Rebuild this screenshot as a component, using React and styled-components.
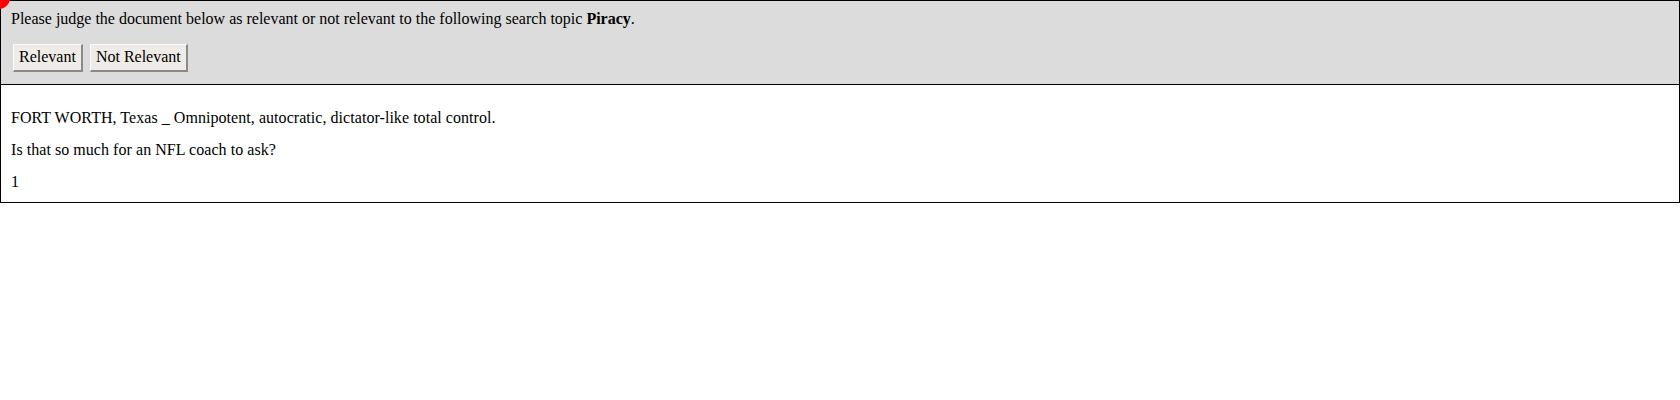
import React from "react";
import styled, { createGlobalStyle } from "styled-components";

const GlobalStyle = createGlobalStyle`
  body {
    margin: 0;
    background: #ffffff;
    font-family: "Liberation Serif", "Times New Roman", serif;
    font-size: 16px;
    color: #000;
  }
`;

function App() {
  return (
    <Page>
      <GlobalStyle />
      <JudgePanel>
        <Prompt>
          Please judge the document below as relevant or not relevant to the following search topic <b>Piracy</b>.
        </Prompt>
        <ButtonRow>
          <JudgeButton>Relevant</JudgeButton>
          <JudgeButton>Not Relevant</JudgeButton>
        </ButtonRow>
      </JudgePanel>
      <DocumentPanel>
        <Para>FORT WORTH, Texas _ Omnipotent, autocratic, dictator-like total control.</Para>
        <Para>Is that so much for an NFL coach to ask?</Para>
        <Para>1</Para>
      </DocumentPanel>
      {/* little red dot sitting on the top-left corner */}
      <Marker />
    </Page>
  );
}

const Page = styled.div`
  position: relative;
  overflow: hidden;
`;

const Marker = styled.div`
  position: absolute;
  left: -12px;
  top: -13px;
  width: 22px;
  height: 22px;
  border-radius: 50%;
  background: #ff0000;
  z-index: 2;
`;

const JudgePanel = styled.div`
  background-color: #dcdcdc;
  border: 1px solid #000;
  padding: 9px 10px 12px;
  display: flex;
  flex-direction: column;
  gap: 16px;
`;

const Prompt = styled.div`
  line-height: 18px;
`;

const ButtonRow = styled.div`
  display: flex;
  gap: 7px;
  padding-left: 2px;
`;

const JudgeButton = styled.button`
  font-family: "Liberation Serif", "Times New Roman", serif;
  font-size: 16px;
  color: #000;
  height: 28px;
  padding: 0 5px 1px;
  background: #efebe6;
  border-top: 1px solid #fbfbfb;
  border-left: 1px solid #fbfbfb;
  border-right: 2px solid #8a8a8a;
  border-bottom: 2px solid #8a8a8a;
  border-radius: 0;
`;

const DocumentPanel = styled.div`
  border: 1px solid #000;
  border-top: none;
  padding: 24px 10px 11px;
  display: flex;
  flex-direction: column;
  gap: 14px;
`;

const Para = styled.p`
  margin: 0;
  line-height: 18px;
  letter-spacing: 0.05px;
`;

export default App;
